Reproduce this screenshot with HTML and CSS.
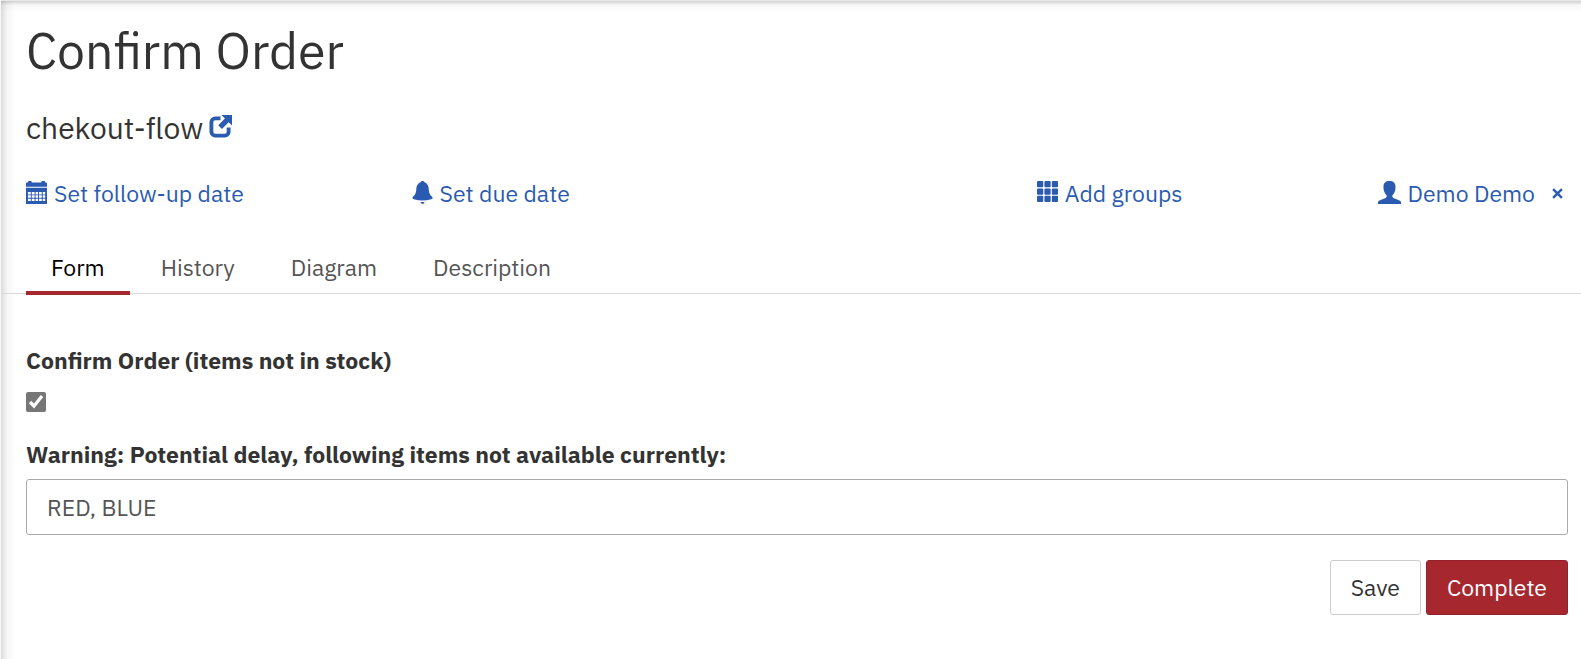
FILE: index.html
```html
<!DOCTYPE html>
<html lang="en">
<head>
<meta charset="utf-8">
<title>Confirm Order</title>
<link rel="stylesheet" href="styles.css">
</head>
<body>
<main class="task">
  <header class="task-header">
    <h1 class="task-name">Confirm Order</h1>
    <h2 class="process-name">chekout-flow
      <a class="process-link" href="#process" aria-label="Open process">
        <svg class="icon" viewBox="0 0 24 24" aria-hidden="true"><path d="M12 3.600H6.500A4 4 0 0 0 2.500 7.600V17.500A4 4 0 0 0 6.500 21.500H16.500A4 4 0 0 0 20.500 17.500V13" fill="none" stroke="currentColor" stroke-width="4"/><path d="M13 0H24V11L20.500 7.600L13.500 14.500L9.700 10.700L16.600 3.700Z" fill="currentColor"/></svg>
      </a>
    </h2>
  </header>

  <div class="meta">
    <a class="meta-item" href="#follow-up">
      <svg class="icon" viewBox="0 0 22 24" aria-hidden="true"><path fill="currentColor" fill-rule="evenodd" d="M0 2.500Q0 1.500 1 1.500H2V1Q2 0 3 0H5Q6 0 6 1V1.500H16V1Q16 0 17 0H19Q20 0 20 1V1.500H21Q22 1.500 22 2.500V6H0ZM0 7H22V24H0ZM2 11.500V14H5V11.500ZM6 11.500V14H9V11.500ZM10 11.500V14H12.500V11.500ZM13.500 11.500V14H16.500V11.500ZM17.500 11.500V14H20V11.500ZM2 15V17.500H5V15ZM6 15V17.500H9V15ZM10 15V17.500H12.500V15ZM13.500 15V17.500H16.500V15ZM17.500 15V17.500H20V15ZM2 18.500V21H5V18.500ZM6 18.500V21H9V18.500ZM10 18.500V21H12.500V18.500ZM13.500 18.500V21H16.500V18.500ZM17.500 18.500V21H20V18.500Z"/></svg>
      Set follow-up date
    </a>
    <a class="meta-item" href="#due">
      <svg class="icon" viewBox="0 0 22 24" aria-hidden="true"><path fill="currentColor" d="M11 0Q13 0 13 1.200C16.500 2.500 17.300 5.500 17.500 8.500C17.800 12.500 18.500 14 21 16.500Q22.500 18.500 20 19Q11 21.500 2 19Q-.5 18.500 1 16.500C3.500 14 4.200 12.500 4.500 8.500C4.700 5.500 5.500 2.500 9 1.200Q9 0 11 0ZM8.800 22H13.200Q12.500 24 11 24Q9.500 24 8.800 22Z"/></svg>
      Set due date
    </a>
    <a class="meta-item meta-end" href="#groups">
      <svg class="icon" viewBox="0 0 22 24" aria-hidden="true"><g fill="currentColor"><rect width="6.500" height="6.500" rx="1"/><rect x="7.750" width="6.500" height="6.500" rx="1"/><rect x="15.500" width="6.500" height="6.500" rx="1"/><rect y="7.750" width="6.500" height="6.500" rx="1"/><rect x="7.750" y="7.750" width="6.500" height="6.500" rx="1"/><rect x="15.500" y="7.750" width="6.500" height="6.500" rx="1"/><rect y="15.500" width="6.500" height="6.500" rx="1"/><rect x="7.750" y="15.500" width="6.500" height="6.500" rx="1"/><rect x="15.500" y="15.500" width="6.500" height="6.500" rx="1"/></g></svg>
      Add groups
    </a>
    <div class="meta-end assignee">
      <a class="meta-item" href="#assignee">
        <svg class="icon" viewBox="0 0 24 24" aria-hidden="true"><path fill="currentColor" d="M12 0C16 0 18.300 2 18.300 6C18.300 10 17.500 12.500 15 15V16.500Q15.500 18 20 19.300Q24 20.800 24 22V24H0V22Q0 20.800 4 19.300Q8.500 18 9 16.500V15C6.500 12.500 5.700 10 5.700 6C5.700 2 8 0 12 0Z"/></svg>
        Demo Demo
      </a>
      <button class="unclaim" type="button" aria-label="Remove assignee">
        <svg viewBox="0 0 12 12" aria-hidden="true"><path d="M1.200 1.200L10.800 10.800M10.800 1.200L1.200 10.800" stroke="currentColor" stroke-width="2.600"/></svg>
      </button>
    </div>
  </div>

  <nav class="tabs">
    <a class="tab active" href="#form">Form</a>
    <a class="tab" href="#history">History</a>
    <a class="tab" href="#diagram">Diagram</a>
    <a class="tab" href="#description">Description</a>
  </nav>

  <form class="task-form">
    <label class="label" for="confirm">Confirm Order (items not in stock)</label>
    <input class="check" id="confirm" type="checkbox" checked>
    <label class="label" for="items">Warning: Potential delay, following items not available currently:</label>
    <input class="field" id="items" type="text" value="RED, BLUE">
    <div class="actions">
      <button class="btn" type="button">Save</button>
      <button class="btn primary" type="submit">Complete</button>
    </div>
  </form>
</main>
</body>
</html>
```
FILE: styles.css
```css
* { box-sizing: border-box; }

body {
  margin: 0;
  background: #fff;
  color: #333;
  font: 23px/30px "IBM Plex Sans", Roboto, sans-serif;
}

a { color: #2b5bb0; text-decoration: none; }

.task {
  min-height: 100vh;
  border-top: 1px solid #e8e8e8;
  border-left: 1px solid #f8f8f8;
  background:
    linear-gradient(to right, rgba(0, 0, 0, 0.14), rgba(0, 0, 0, 0.04) 6px, transparent 14px),
    linear-gradient(to bottom, rgba(0, 0, 0, 0.18), rgba(0, 0, 0, 0.03) 4px, transparent 11px);
}

.task-header { padding: 14px 25px 0; }

.task-name {
  margin: 0;
  font-size: 50px;
  line-height: 72px;
  font-weight: 400;
}

.process-name {
  display: flex;
  align-items: center;
  gap: 6px;
  margin: 21px 0 0;
  font-size: 30px;
  line-height: 40px;
  font-weight: 400;
}

.process-link { display: flex; padding-bottom: 4px; }

.icon { height: 23px; flex: none; }

.meta {
  display: grid;
  grid-template-columns: repeat(4, 1fr);
  margin: 30px 13px 0 25px;
}

.meta-item { display: flex; align-items: center; gap: 7px; }
.meta-item .icon { margin-bottom: 2px; }
.meta-end { justify-content: flex-end; }
.assignee { display: flex; gap: 12px; }

.unclaim {
  display: flex;
  align-items: center;
  padding: 0 5px;
  border: 0;
  background: none;
  color: #2b5bb0;
}

.unclaim svg { width: 11px; }

.tabs {
  display: flex;
  gap: 6px;
  margin-top: 44px;
  padding-left: 25px;
  border-bottom: 1px solid #d8d8d8;
}

.tab {
  padding: 0 25px 9px;
  margin-bottom: -2px;
  border-bottom: 4px solid transparent;
  color: #555;
}

.tab.active { color: #000; border-color: #a7272f; }

.task-form {
  display: flex;
  flex-direction: column;
  padding: 51px 13px 0 25px;
}

.label { align-self: flex-start; font-weight: 700; }

.check {
  width: 20px;
  height: 20px;
  margin: 17px 0 27px;
  accent-color: #767676;
}

.field {
  width: 100%;
  height: 56px;
  margin-top: 10px;
  padding: 0 20px;
  border: 1px solid #aaa;
  border-radius: 3px;
  background: #fff;
  color: #555;
  font: inherit;
}

.actions {
  display: flex;
  justify-content: flex-end;
  gap: 5px;
  margin-top: 25px;
}

.btn {
  height: 55px;
  padding: 0 20px 2px;
  border: 1px solid #ccc;
  border-radius: 3px;
  background: #fff;
  color: #333;
  font: inherit;
}

.btn.primary { background: #a7272f; border-color: #94222a; color: #fff; }
```
